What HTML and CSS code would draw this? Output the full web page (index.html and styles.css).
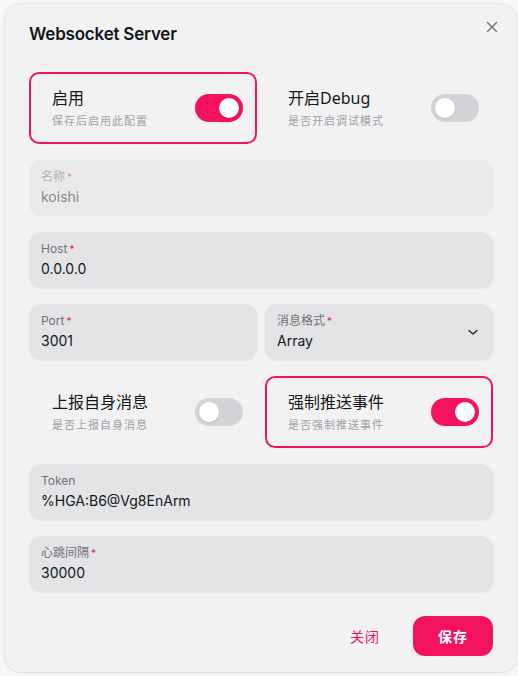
FILE: index.html
```html
<!DOCTYPE html>
<html lang="zh-CN">
<head>
<meta charset="utf-8">
<title>Websocket Server</title>
<link rel="stylesheet" href="styles.css">
</head>
<body>
<div class="dialog">
  <button class="close" aria-label="close">
    <svg width="12" height="12" viewBox="0 0 12 12"><path d="M1.5 1.5L10.5 10.5M10.5 1.5L1.5 10.5" stroke="#71717a" stroke-width="1.4" stroke-linecap="round" fill="none"/></svg>
  </button>
  <header class="header">Websocket Server</header>
  <div class="body">
    <div class="row">
      <div class="card active">
        <div class="card-text">
          <div class="card-title">启用</div>
          <div class="card-desc">保存后启用此配置</div>
        </div>
        <span class="switch on"><span class="thumb"></span></span>
      </div>
      <div class="card">
        <div class="card-text">
          <div class="card-title">开启Debug</div>
          <div class="card-desc">是否开启调试模式</div>
        </div>
        <span class="switch"><span class="thumb"></span></span>
      </div>
    </div>

    <div class="field disabled">
      <div class="field-text">
        <span class="label req">名称</span>
        <span class="value">koishi</span>
      </div>
    </div>

    <div class="field">
      <div class="field-text">
        <span class="label req">Host</span>
        <span class="value">0.0.0.0</span>
      </div>
    </div>

    <div class="row">
      <div class="field">
        <div class="field-text">
          <span class="label req">Port</span>
          <span class="value">3001</span>
        </div>
      </div>
      <div class="field select">
        <div class="field-text">
          <span class="label req">消息格式</span>
          <span class="value">Array</span>
        </div>
        <svg class="chevron" width="16" height="16" viewBox="0 0 16 16"><path d="M4 6.5L8 10L12 6.5" stroke="#27272a" stroke-width="1.4" stroke-linecap="round" stroke-linejoin="round" fill="none"/></svg>
      </div>
    </div>

    <div class="row">
      <div class="card">
        <div class="card-text">
          <div class="card-title">上报自身消息</div>
          <div class="card-desc">是否上报自身消息</div>
        </div>
        <span class="switch"><span class="thumb"></span></span>
      </div>
      <div class="card active">
        <div class="card-text">
          <div class="card-title">强制推送事件</div>
          <div class="card-desc">是否强制推送事件</div>
        </div>
        <span class="switch on"><span class="thumb"></span></span>
      </div>
    </div>

    <div class="field">
      <div class="field-text">
        <span class="label">Token</span>
        <span class="value">%HGA:B6@Vg8EnArm</span>
      </div>
    </div>

    <div class="field">
      <div class="field-text">
        <span class="label req">心跳间隔</span>
        <span class="value">30000</span>
      </div>
    </div>
  </div>
  <footer class="footer">
    <button class="btn ghost">关闭</button>
    <button class="btn primary">保存</button>
  </footer>
</div>
</body>
</html>
```

FILE: styles.css
```css
html, body {
  margin: 0;
  padding: 0;
}
body {
  background: #f8f8f8;
  font-family: Inter, "Noto Sans", "Noto Sans CJK SC", sans-serif;
  color: #11181c;
}
.dialog {
  position: relative;
  box-sizing: border-box;
  width: 512px;
  height: 668px;
  margin: 4px 1px 4px 5px;
  background: #f2f2f2;
  border-radius: 16px;
  box-shadow: 0 0 0 1px rgba(0,0,0,0.05), 0 1px 6px rgba(0,0,0,0.06);
  display: flex;
  flex-direction: column;
}
.close {
  position: absolute;
  top: 11px;
  right: 13px;
  width: 24px;
  height: 24px;
  padding: 0;
  border: 0;
  background: transparent;
  display: flex;
  align-items: center;
  justify-content: center;
}
.header {
  padding: 16px 24px;
  height: 28px;
  line-height: 28px;
  font-size: 17px;
  font-weight: 600;
  color: #11181c;
  letter-spacing: -0.2px;
}
.body {
  flex: 1;
  padding: 8px 24px;
  display: flex;
  flex-direction: column;
  gap: 16px;
}
.row {
  display: grid;
  grid-template-columns: 1fr 1fr;
  gap: 8px;
}
.card {
  box-sizing: border-box;
  height: 72px;
  border: 2px solid transparent;
  border-radius: 10px;
  padding: 0 12px 0 21px;
  display: flex;
  align-items: center;
  justify-content: space-between;
}
.card.active {
  border-color: #f31260;
}
.card-text {
  display: flex;
  flex-direction: column;
  gap: 4px;
}
.card-title {
  font-family: "Noto Sans", "Noto Sans CJK SC", sans-serif;
  font-size: 16px;
  line-height: 22px;
  color: #11181c;
  letter-spacing: 0;
}
.card-desc {
  font-family: "Noto Sans", "Noto Sans CJK SC", sans-serif;
  font-size: 11px;
  line-height: 16px;
  color: #a1a1aa;
  letter-spacing: 1px;
}
.switch {
  position: relative;
  width: 48px;
  height: 28px;
  border-radius: 14px;
  background: #d4d4d8;
  flex: none;
}
.switch .thumb {
  position: absolute;
  top: 4px;
  left: 4px;
  width: 20px;
  height: 20px;
  border-radius: 50%;
  background: #ffffff;
  box-shadow: 0 1px 2px rgba(0,0,0,0.1);
}
.switch.on {
  background: #f31260;
}
.switch.on .thumb {
  left: 24px;
}
.field {
  box-sizing: border-box;
  height: 56px;
  border-radius: 12px;
  background: #e4e4e7;
  box-shadow: 0 1px 2px rgba(0,0,0,0.05);
  padding: 0 12px;
  display: flex;
  align-items: center;
}
.field.disabled {
  opacity: 0.5;
  box-shadow: none;
}
.field-text {
  flex: 1;
  display: flex;
  flex-direction: column;
  gap: 2px;
}
.label {
  font-size: 12px;
  line-height: 16px;
  color: #71717a;
}
.label.req::after {
  content: "*";
  color: #f31260;
  margin-left: 2px;
  font-size: 10px;
}
.value {
  font-size: 14px;
  line-height: 20px;
  color: #11181c;
}
.chevron {
  flex: none;
}
.footer {
  padding: 16px 24px;
  display: flex;
  justify-content: flex-end;
  gap: 8px;
}
.btn {
  width: 80px;
  height: 40px;
  border: 0;
  border-radius: 12px;
  font-family: "Noto Sans", "Noto Sans CJK SC", sans-serif;
  font-size: 14px;
  letter-spacing: 1px;
}
.btn.ghost {
  background: transparent;
  color: #f31260;
}
.btn.primary {
  background: #f31260;
  color: #ffffff;
  font-weight: 700;
}
```
